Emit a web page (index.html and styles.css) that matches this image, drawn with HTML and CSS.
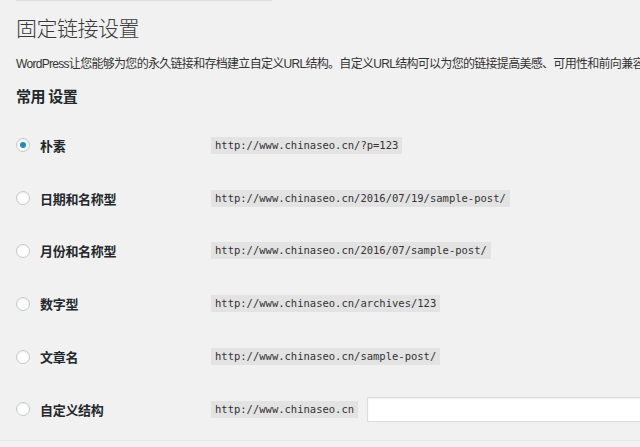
FILE: index.html
```html
<!DOCTYPE html>
<html lang="zh-CN">
<head>
<meta charset="utf-8">
<title>固定链接设置</title>
<link rel="stylesheet" href="styles.css">
</head>
<body>
<div class="wrap">
  <div class="topline"></div>
  <h1 class="title">固定链接设置</h1>
  <p class="desc">WordPress让您能够为您的永久链接和存档建立自定义URL结构。自定义URL结构可以为您的链接提高美感、可用性和前向兼容性。</p>
  <h2 class="section">常用 设置</h2>
  <div class="options">
    <div class="row">
      <label class="opt"><span class="radio checked"></span><span class="lbl">朴素</span></label>
      <div class="val"><code class="code">http://www.chinaseo.cn/?p=123</code></div>
    </div>
    <div class="row">
      <label class="opt"><span class="radio"></span><span class="lbl">日期和名称型</span></label>
      <div class="val"><code class="code">http://www.chinaseo.cn/2016/07/19/sample-post/</code></div>
    </div>
    <div class="row">
      <label class="opt"><span class="radio"></span><span class="lbl">月份和名称型</span></label>
      <div class="val"><code class="code">http://www.chinaseo.cn/2016/07/sample-post/</code></div>
    </div>
    <div class="row">
      <label class="opt"><span class="radio"></span><span class="lbl">数字型</span></label>
      <div class="val"><code class="code">http://www.chinaseo.cn/archives/123</code></div>
    </div>
    <div class="row">
      <label class="opt"><span class="radio"></span><span class="lbl">文章名</span></label>
      <div class="val"><code class="code">http://www.chinaseo.cn/sample-post/</code></div>
    </div>
    <div class="row">
      <label class="opt"><span class="radio"></span><span class="lbl">自定义结构</span></label>
      <div class="val"><code class="code">http://www.chinaseo.cn</code><span class="input"></span></div>
    </div>
  </div>
  <div class="bottomline"></div>
</div>
</body>
</html>
```

FILE: styles.css
```css
html, body {
  margin: 0;
  padding: 0;
  background: #f1f1f1;
  overflow: hidden;
}
.wrap {
  width: 640px;
  height: 447px;
  overflow: hidden;
  padding-left: 16px;
  box-sizing: border-box;
  font-family: "Liberation Sans", "Noto Sans CJK SC", sans-serif;
  color: #23282d;
}
.topline {
  width: 256px;
  height: 1px;
  background: #e0e0e0;
  border-bottom: 1px solid #ebebeb;
}
.title {
  margin: 12px 0 0;
  font-size: 21px;
  line-height: 30px;
  font-weight: 300;
  color: #3a3a3a;
  letter-spacing: -0.5px;
}
.desc {
  margin: 10px 0 0;
  font-size: 12px;
  line-height: 20px;
  color: #333;
  white-space: nowrap;
  letter-spacing: -0.7px;
}
.section {
  margin: 12px 0 0;
  font-size: 15px;
  line-height: 22px;
  font-weight: 700;
  color: #23282d;
  letter-spacing: -0.6px;
}
.options {
  margin-top: 11px;
  display: flex;
  flex-direction: column;
}
.row {
  height: 52.8px;
  display: flex;
  align-items: center;
}
.opt {
  width: 195px;
  display: flex;
  align-items: center;
  gap: 10px;
  flex-shrink: 0;
}
.radio {
  width: 14px;
  height: 14px;
  border-radius: 50%;
  border: 1px solid #c4c8cc;
  background: #fff;
  box-sizing: border-box;
  box-shadow: inset 0 1px 2px rgba(0,0,0,0.07);
  display: flex;
  align-items: center;
  justify-content: center;
}
.radio.checked::after {
  content: "";
  width: 6px;
  height: 6px;
  border-radius: 50%;
  background: #1e8cbe;
}
.lbl {
  font-size: 13px;
  font-weight: 700;
  color: #23282d;
  letter-spacing: -0.3px;
}
.val {
  display: flex;
  align-items: center;
  gap: 9px;
  white-space: nowrap;
}
.code {
  font-family: "DejaVu Sans Mono", "Liberation Mono", monospace;
  font-size: 10.5px;
  line-height: 17px;
  padding: 0 4px;
  background: #e3e3e3;
  color: #333;
}
.input {
  display: block;
  width: 300px;
  height: 25px;
  box-sizing: border-box;
  background: #fff;
  border: 1px solid #dddddd;
  box-shadow: inset 0 1px 2px rgba(0,0,0,0.07);
}
.bottomline {
  margin-top: 4px;
  margin-left: -16px;
  width: 640px;
  height: 1px;
  background: #e8e8e8;
}
```
